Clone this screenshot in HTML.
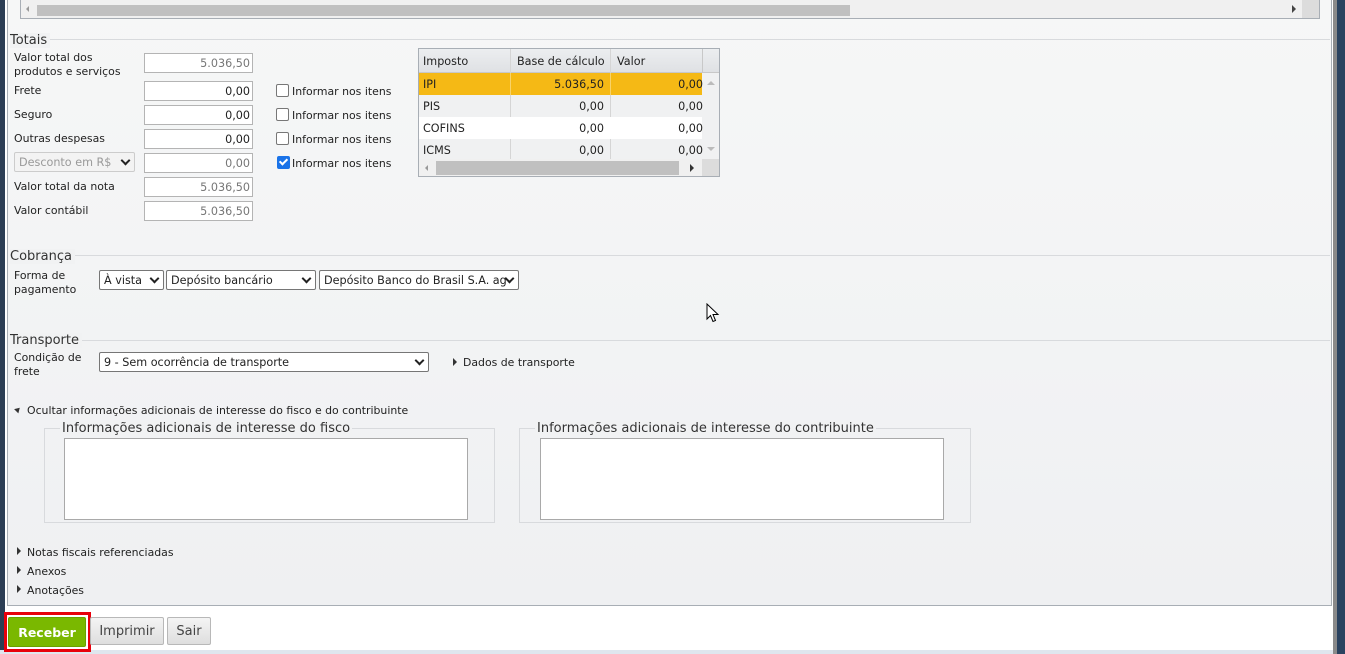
<!DOCTYPE html>
<html><head><meta charset="utf-8"><style>
*{box-sizing:border-box;margin:0;padding:0}
body{width:1345px;height:654px;position:relative;overflow:hidden;background:#fff;font-family:"DejaVu Sans","Liberation Sans",sans-serif;font-size:10.9px;color:#222}
.a{position:absolute;white-space:nowrap}
.inp{position:absolute;width:109px;height:20px;background:#fff;border:1px solid #b4b4b4;text-align:right;padding:3px 2px 0 0;font-size:11.2px}
.gr{color:#777}
.cb{position:absolute;width:13px;height:13px;border:1px solid #777;border-radius:2px;background:#fff}
.sel{position:absolute;height:20px;background:#fff;border:1px solid #767676;border-radius:2px;padding:3px 0 0 4px;font-size:11.2px;white-space:nowrap;overflow:hidden}
.sel:after{content:"";position:absolute;right:5px;top:4px;width:5px;height:5px;border-right:2px solid #222;border-bottom:2px solid #222;transform:rotate(45deg)}
.leg{position:absolute;font-size:13px;color:#333;background:#f1f2f3;padding-right:3px}
.hl{position:absolute;height:1px;background:#d8dadd}
.tri{position:absolute;width:0;height:0;border-top:4px solid transparent;border-bottom:4px solid transparent;border-left:4px solid #333}
.td{position:absolute;font-size:11.2px}
.btn{position:absolute;height:28px;border:1px solid #b8b8b8;border-radius:2px;background:linear-gradient(#f4f4f4,#dedede);font-size:13px;color:#444;text-align:center;padding-top:6px}
</style></head><body>
<div class="a" style="left:0;top:0;width:5px;height:654px;background:#2c3e55"></div>
<div class="a" style="left:7px;top:0;width:1325px;height:606px;background:linear-gradient(#f6f7f7,#eff0f2);border:1px solid #a8aeb5;border-top:none"></div>
<div class="a" style="left:1333px;top:0;width:4px;height:654px;background:#8a8a8a"></div>
<div class="a" style="left:1337px;top:0;width:8px;height:654px;background:#2b4360"></div>
<div class="a" style="left:0;top:650px;width:1333px;height:4px;background:#dfe6ee"></div>
<div class="a" style="left:20px;top:0;width:1300px;height:19px;background:#f0f0f0;border:1px solid #a8aeb5;border-top:none"></div>
<div class="a" style="left:37px;top:5px;width:813px;height:11px;background:#c0c0c0"></div>
<div class="a" style="left:26px;top:6px;width:0;height:0;border-top:3px solid transparent;border-bottom:3px solid transparent;border-right:3px solid #999"></div>
<div class="a" style="left:1292px;top:5px;width:0;height:0;border-top:4px solid transparent;border-bottom:4px solid transparent;border-left:4px solid #444"></div>
<div class="a" style="left:1302px;top:0;width:17px;height:18px;background:#dcdcdc"></div>
<div class="hl" style="left:10px;top:39px;width:1320px"></div>
<div class="leg" style="left:10px;top:33px">Totais</div>
<div class="a" style="left:14px;top:51px;line-height:13.5px">Valor total dos<br>produtos e serviços</div>
<div class="a" style="left:14px;top:84px">Frete</div>
<div class="a" style="left:14px;top:108px">Seguro</div>
<div class="a" style="left:14px;top:132px">Outras despesas</div>
<div class="sel" style="left:14px;top:152px;width:121px;height:20px;border-color:#ccc;color:#999;background:#f3f3f3">Desconto em R$</div>
<div class="a" style="left:14px;top:180px">Valor total da nota</div>
<div class="a" style="left:14px;top:204px">Valor contábil</div>
<div class="inp gr" style="left:144px;top:53px">5.036,50</div>
<div class="inp" style="left:144px;top:81px">0,00</div>
<div class="inp" style="left:144px;top:105px">0,00</div>
<div class="inp" style="left:144px;top:129px">0,00</div>
<div class="inp gr" style="left:144px;top:153px">0,00</div>
<div class="inp gr" style="left:144px;top:177px">5.036,50</div>
<div class="inp gr" style="left:144px;top:201px">5.036,50</div>
<div class="cb" style="left:276px;top:84px"></div>
<div class="cb" style="left:276px;top:108px"></div>
<div class="cb" style="left:276px;top:132px"></div>
<div class="cb" style="left:277px;top:156px;background:#1a73e8;border-color:#1a73e8"><div class="a" style="left:3px;top:0px;width:5px;height:8px;border-right:2px solid #fff;border-bottom:2px solid #fff;transform:rotate(45deg)"></div></div>
<div class="a" style="left:292px;top:85px">Informar nos itens</div>
<div class="a" style="left:292px;top:109px">Informar nos itens</div>
<div class="a" style="left:292px;top:133px">Informar nos itens</div>
<div class="a" style="left:292px;top:157px">Informar nos itens</div>
<div class="a" style="left:418px;top:48px;width:302px;height:129px;border:1px solid #a8aeb5;background:#f0f1f2;overflow:hidden">
<div class="a" style="left:0;top:0;width:300px;height:24px;background:linear-gradient(#eceef0,#dfe1e4);border-bottom:1px solid #c8c8c8"></div>
<div class="a" style="left:91px;top:0;width:1px;height:110px;background:#d5d5d5"></div>
<div class="a" style="left:191px;top:0;width:1px;height:110px;background:#d5d5d5"></div>
<div class="a" style="left:283px;top:0;width:1px;height:24px;background:#c8c8c8"></div>
<div class="td" style="left:4px;top:6px">Imposto</div>
<div class="td" style="left:98px;top:6px">Base de cálculo</div>
<div class="td" style="left:198px;top:6px">Valor</div>
<div class="a" style="left:0;top:24px;width:283px;height:22px;background:#f5b915"></div>
<div class="a" style="left:0;top:68px;width:283px;height:22px;background:#fff"></div>
<div class="a" style="left:91px;top:24px;width:1px;height:22px;background:#f8d36a"></div>
<div class="a" style="left:191px;top:24px;width:1px;height:22px;background:#f8d36a"></div>
<div class="td" style="left:4px;top:29px">IPI</div><div class="td" style="left:100px;top:29px;width:85px;text-align:right">5.036,50</div><div class="td" style="left:200px;top:29px;width:84px;text-align:right;overflow:hidden">0,00</div>
<div class="td" style="left:4px;top:51px">PIS</div><div class="td" style="left:100px;top:51px;width:85px;text-align:right">0,00</div><div class="td" style="left:200px;top:51px;width:84px;text-align:right">0,00</div>
<div class="td" style="left:4px;top:73px">COFINS</div><div class="td" style="left:100px;top:73px;width:85px;text-align:right">0,00</div><div class="td" style="left:200px;top:73px;width:84px;text-align:right">0,00</div>
<div class="td" style="left:4px;top:95px">ICMS</div><div class="td" style="left:100px;top:95px;width:85px;text-align:right">0,00</div><div class="td" style="left:200px;top:95px;width:84px;text-align:right">0,00</div>
<div class="a" style="left:0;top:110px;width:300px;height:18px;background:#f0f0f0"></div>
<div class="a" style="left:17px;top:112px;width:243px;height:14px;background:#c0c0c0"></div>
<div class="a" style="left:283px;top:110px;width:17px;height:18px;background:#dcdcdc"></div>
<div class="a" style="left:271px;top:115px;border-top:4px solid transparent;border-bottom:4px solid transparent;border-left:4px solid #333"></div>
<div class="a" style="left:6px;top:116px;border-top:3px solid transparent;border-bottom:3px solid transparent;border-right:3px solid #999"></div>
<div class="a" style="left:288px;top:32px;border-left:4px solid transparent;border-right:4px solid transparent;border-bottom:4px solid #bbb"></div>
<div class="a" style="left:288px;top:98px;border-left:4px solid transparent;border-right:4px solid transparent;border-top:4px solid #bbb"></div>
</div>
<div class="hl" style="left:10px;top:255px;width:1320px"></div>
<div class="leg" style="left:10px;top:249px">Cobrança</div>
<div class="a" style="left:14px;top:269px;line-height:13.5px">Forma de<br>pagamento</div>
<div class="sel" style="left:99px;top:270px;width:65px">À vista</div>
<div class="sel" style="left:166px;top:270px;width:150px">Depósito bancário</div>
<div class="sel" style="left:319px;top:270px;width:200px;padding-right:18px">Depósito Banco do Brasil S.A. ag</div>
<svg class="a" style="left:706px;top:303px" width="14" height="20" viewBox="0 0 14 20"><path d="M1 1 L1 16 L4.5 12.5 L7 18.5 L9.5 17.5 L7 11.5 L12 11.5 Z" fill="#fff" stroke="#000" stroke-width="1"/></svg>
<div class="hl" style="left:10px;top:340px;width:1320px"></div>
<div class="leg" style="left:10px;top:333px">Transporte</div>
<div class="a" style="left:14px;top:351px;line-height:13.5px">Condição de<br>frete</div>
<div class="sel" style="left:99px;top:352px;width:330px">9 - Sem ocorrência de transporte</div>
<div class="tri" style="left:453px;top:358px"></div>
<div class="a" style="left:463px;top:356px">Dados de transporte</div>
<div class="a" style="left:15px;top:407px;border-left:3px solid transparent;border-right:3px solid transparent;border-bottom:5px solid #333;transform:rotate(45deg)"></div>
<div class="a" style="left:27px;top:404px">Ocultar informações adicionais de interesse do fisco e do contribuinte</div>
<div class="a" style="left:44px;top:428px;width:451px;height:95px;border:1px solid #d8dadd"></div>
<div class="leg" style="left:60px;top:421px;padding:0 2px">Informações adicionais de interesse do fisco</div>
<div class="a" style="left:64px;top:438px;width:404px;height:82px;background:#fff;border:1px solid #a9a9a9"></div>
<div class="a" style="left:519px;top:428px;width:452px;height:95px;border:1px solid #d8dadd"></div>
<div class="leg" style="left:535px;top:421px;padding:0 2px">Informações adicionais de interesse do contribuinte</div>
<div class="a" style="left:540px;top:438px;width:404px;height:82px;background:#fff;border:1px solid #a9a9a9"></div>
<div class="tri" style="left:17px;top:547px"></div><div class="a" style="left:27px;top:546px">Notas fiscais referenciadas</div>
<div class="tri" style="left:17px;top:566px"></div><div class="a" style="left:27px;top:565px">Anexos</div>
<div class="tri" style="left:17px;top:585px"></div><div class="a" style="left:27px;top:584px">Anotações</div>
<div class="a" style="left:4px;top:612px;width:87px;height:40px;border:3px solid #e8000b"></div>
<div class="btn" style="left:8px;top:617px;width:78px;height:30px;background:#7ab800;border-color:#6aa000;color:#fff;font-weight:bold;font-size:12.5px;padding-top:7px">Receber</div>
<div class="btn" style="left:90px;top:617px;width:74px">Imprimir</div>
<div class="btn" style="left:167px;top:617px;width:44px">Sair</div>
</body></html>
